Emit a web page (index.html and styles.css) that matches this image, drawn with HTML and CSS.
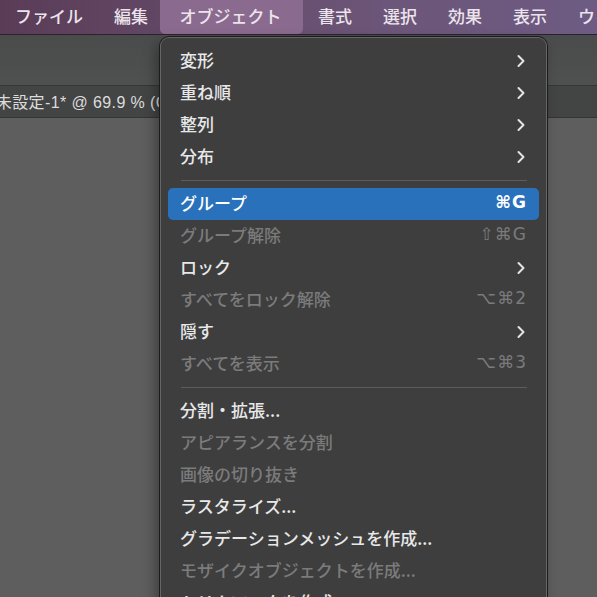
FILE: index.html
```html
<!DOCTYPE html>
<html lang="ja">
<head>
<meta charset="utf-8">
<link rel="stylesheet" href="styles.css">
</head>
<body>
<div class="app">
  <nav class="menubar">
    <span class="mb-item">ファイル</span>
    <span class="mb-item">編集</span>
    <span class="mb-item active">オブジェクト</span>
    <span class="mb-item">書式</span>
    <span class="mb-item">選択</span>
    <span class="mb-item">効果</span>
    <span class="mb-item">表示</span>
    <span class="mb-item">ウィンドウ</span>
  </nav>
  <div class="toolbar"></div>
  <div class="tabbar"><div class="tab"><span class="tab-title">名称未設定-1* @ 69.9 % (CMYK/プレビュー)</span></div></div>
  <div class="canvas"></div>

  <div class="menu">
    <div class="row"><span>変形</span><svg class="chev" viewBox="0 0 10 14"><path d="M2.5 2 L7.5 7 L2.5 12"/></svg></div>
    <div class="row"><span>重ね順</span><svg class="chev" viewBox="0 0 10 14"><path d="M2.5 2 L7.5 7 L2.5 12"/></svg></div>
    <div class="row"><span>整列</span><svg class="chev" viewBox="0 0 10 14"><path d="M2.5 2 L7.5 7 L2.5 12"/></svg></div>
    <div class="row"><span>分布</span><svg class="chev" viewBox="0 0 10 14"><path d="M2.5 2 L7.5 7 L2.5 12"/></svg></div>
    <div class="sep"></div>
    <div class="row selected"><span>グループ</span><span class="key">⌘G</span></div>
    <div class="row disabled"><span>グループ解除</span><span class="key">⇧⌘G</span></div>
    <div class="row"><span>ロック</span><svg class="chev" viewBox="0 0 10 14"><path d="M2.5 2 L7.5 7 L2.5 12"/></svg></div>
    <div class="row disabled"><span>すべてをロック解除</span><span class="key">⌥⌘2</span></div>
    <div class="row"><span>隠す</span><svg class="chev" viewBox="0 0 10 14"><path d="M2.5 2 L7.5 7 L2.5 12"/></svg></div>
    <div class="row disabled"><span>すべてを表示</span><span class="key">⌥⌘3</span></div>
    <div class="sep"></div>
    <div class="row"><span>分割・拡張...</span></div>
    <div class="row disabled"><span>アピアランスを分割</span></div>
    <div class="row disabled"><span>画像の切り抜き</span></div>
    <div class="row"><span>ラスタライズ...</span></div>
    <div class="row"><span>グラデーションメッシュを作成...</span></div>
    <div class="row disabled"><span>モザイクオブジェクトを作成...</span></div>
    <div class="row"><span>トリムマークを作成</span></div>
  </div>
</div>
</body>
</html>
```

FILE: styles.css
```css
* { box-sizing: border-box; }
html, body {
  margin: 0;
  padding: 0;
  width: 597px;
  height: 597px;
  overflow: hidden;
  background: #5d5d5d;
  font-family: "Noto Sans CJK JP", "Noto Sans", "DejaVu Sans", sans-serif;
}
.app {
  position: relative;
  width: 597px;
  height: 597px;
  display: flex;
  flex-direction: column;
}
.menubar {
  height: 35px;
  flex: none;
  display: flex;
  align-items: stretch;
  background: linear-gradient(90deg, #5a3c57 0%, #644a68 35%, #6c5679 65%, #6e5b83 100%);
  border-bottom: 1px solid #2a2230;
  white-space: nowrap;
  overflow: hidden;
}
.mb-item {
  display: flex;
  align-items: center;
  padding: 0 15.5px 3px;
  font-size: 17px;
  font-weight: 500;
  color: #ece4ec;
  line-height: 1;
}
.mb-item:first-child { padding-left: 15px; }
.mb-item.active {
  margin-left: -4px;
  padding: 0 21px 3px 20px;
  background: #8a6a8e;
  border-radius: 0 0 5px 5px;
}
.toolbar {
  height: 51px;
  flex: none;
  background: linear-gradient(180deg, #4a4b4b, #4f5050);
  border-bottom: 1px solid #363636;
}
.tabbar {
  height: 32px;
  flex: none;
  background: #434444;
  border-bottom: 1px solid #343434;
  display: flex;
  align-items: center;
}
.tab {
  width: 159px;
  overflow: hidden;
  white-space: nowrap;
  padding-bottom: 2px;
}
.tab-title {
  display: inline-block;
  margin-left: -37px;
  font-size: 16px;
  letter-spacing: 0.4px;
  color: #dcdcdc;
  font-family: "Liberation Sans", "Noto Sans CJK JP", sans-serif;
}
.canvas {
  flex: 1;
  background: #5e5e5e;
}
.menu {
  position: absolute;
  left: 160px;
  top: 37px;
  width: 387px;
  height: 600px;
  background: #3e3e3f;
  border: 1px solid #666667;
  border-bottom: none;
  border-radius: 9px 9px 0 0;
  box-shadow: 0 0 0 1px #1c1c1c, -4px 6px 14px rgba(0,0,0,0.35);
  padding: 7px 7px 0 7px;
  display: flex;
  flex-direction: column;
}
.row {
  height: 32px;
  flex: none;
  display: flex;
  align-items: center;
  justify-content: space-between;
  padding: 0 12px 4px 12px;
  font-size: 17px;
  font-weight: 500;
  color: #e8e8e8;
  border-radius: 5px;
  line-height: 1;
  white-space: nowrap;
}
.row.selected {
  background: #2a71bb;
  color: #ffffff;
}
.row.disabled { color: #7b7b7b; }
.key {
  font-family: "DejaVu Sans", "Noto Sans", sans-serif;
  font-size: 17px;
  font-weight: normal;
  letter-spacing: 1px;
}
.row.selected .key { font-weight: bold; }
.chev {
  width: 10px;
  height: 14px;
  margin-right: 1px;
  margin-top: 3px;
  fill: none;
  stroke: #e4e4e4;
  stroke-width: 2;
  stroke-linecap: round;
  stroke-linejoin: round;
}
.sep {
  flex: none;
  height: 1px;
  margin: 7px 12px 7px 13px;
  background: #5c5c5c;
}
```
